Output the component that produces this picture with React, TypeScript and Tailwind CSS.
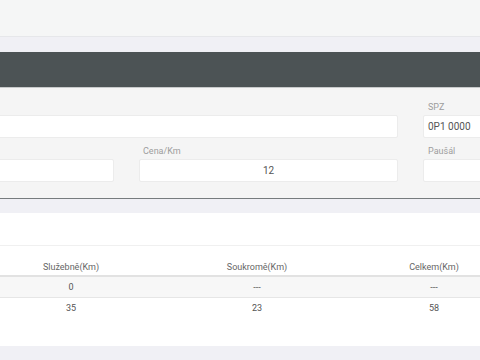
import React from 'react';

const rows = [
  { sluzebne: '0', soukrome: '---', celkem: '---' },
  { sluzebne: '35', soukrome: '23', celkem: '58' },
];

const App: React.FC = () => {
  return (
    <div className="w-[480px] h-[360px] overflow-hidden bg-white font-['Roboto',sans-serif]">
      {/* top strip */}
      <div className="h-[37px] bg-[#f5f6f6] border-b border-[#e6e7ea]"></div>
      <div className="h-[15px] bg-[#f0f0f5]"></div>
      <div className="h-[36px] bg-[#4c5355] border-b border-[#c8cacb]"></div>

      {/* form */}
      <div className="h-[111px] bg-[#f5f5f5] border-b border-[#777c7e] overflow-hidden pt-[12px]">
        <div className="ml-[-145px] grid grid-cols-[259px_259px_259px] gap-x-[25px]">
          <div className="col-span-2">
            <div className="h-[14px] mb-[1px]"></div>
            <div className="h-[23px] bg-white border border-[#ececec] rounded-[2px]"></div>
          </div>
          <div>
            <div className="h-[14px] mb-[1px] text-[9px] leading-[14px] text-[#9d9d9d] pl-[5px]">SPZ</div>
            <div className="h-[23px] bg-white border border-[#ececec] rounded-[2px] px-[4px] text-[10px] leading-[21px] text-[#555]">0P1 0000</div>
          </div>

          <div className="mt-[6px]">
            <div className="h-[14px] mb-[1px]"></div>
            <div className="h-[23px] bg-white border border-[#ececec] rounded-[2px]"></div>
          </div>
          <div className="mt-[6px]">
            <div className="h-[14px] mb-[1px] text-[9px] leading-[14px] text-[#9d9d9d] pl-[4px]">Cena/Km</div>
            <div className="h-[23px] bg-white border border-[#ececec] rounded-[2px] text-center text-[10px] leading-[21px] text-[#555]">12</div>
          </div>
          <div className="mt-[6px]">
            <div className="h-[14px] mb-[1px] text-[9px] leading-[14px] text-[#9d9d9d] pl-[5px]">Paušál</div>
            <div className="h-[23px] bg-white border border-[#ececec] rounded-[2px]"></div>
          </div>
        </div>
      </div>
      <div className="h-[14px] bg-[#f0f0f5]"></div>

      {/* table card */}
      <div className="h-[133px] bg-white">
        <div className="h-[33px] border-b border-[#f0f0f0]"></div>
        <div className="grid grid-cols-[142px_230px_124px] h-[31px] border-b-2 border-[#e2e2e2] pt-[14px] text-[9px] leading-[14px] text-[#666]">
          <div className="text-center">Služebně(Km)</div>
          <div className="text-center">Soukromě(Km)</div>
          <div className="text-center">Celkem(Km)</div>
        </div>
        {rows.map((r, i) => (
          <div
            key={i}
            className={`grid grid-cols-[142px_230px_124px] h-[21px] text-[9px] leading-[21px] text-[#555] ${i === 0 ? 'bg-[#f7f7f7] border-b border-[#e6e6e6]' : ''}`}
          >
            <div className="text-center">{r.sluzebne}</div>
            <div className="text-center">{r.soukrome}</div>
            <div className="text-center">{r.celkem}</div>
          </div>
        ))}
      </div>
      <div className="h-[14px] bg-[#f0f0f5]"></div>
    </div>
  );
};

export default App;
